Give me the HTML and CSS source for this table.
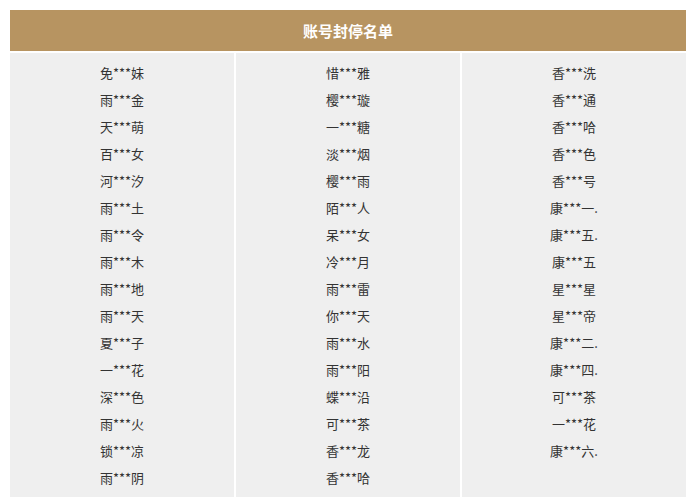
FILE: index.html
```html
<!DOCTYPE html>
<html lang="zh-CN">
<head>
<meta charset="utf-8">
<title>账号封停名单</title>
<link rel="stylesheet" href="styles.css">
</head>
<body>
<div class="board">
  <div class="board-title">账号封停名单</div>
  <div class="board-cols">
    <ul class="col">
      <li>免***妹</li><li>雨***金</li><li>天***萌</li><li>百***女</li><li>河***汐</li><li>雨***土</li><li>雨***令</li><li>雨***木</li><li>雨***地</li><li>雨***天</li><li>夏***子</li><li>一***花</li><li>深***色</li><li>雨***火</li><li>锁***凉</li><li>雨***阴</li>
    </ul>
    <ul class="col">
      <li>惜***雅</li><li>樱***璇</li><li>一***糖</li><li>淡***烟</li><li>樱***雨</li><li>陌***人</li><li>呆***女</li><li>冷***月</li><li>雨***雷</li><li>你***天</li><li>雨***水</li><li>雨***阳</li><li>蝶***沿</li><li>可***茶</li><li>香***龙</li><li>香***哈</li>
    </ul>
    <ul class="col">
      <li>香***洗</li><li>香***通</li><li>香***哈</li><li>香***色</li><li>香***号</li><li>康***一.</li><li>康***五.</li><li>康***五</li><li>星***星</li><li>星***帝</li><li>康***二.</li><li>康***四.</li><li>可***茶</li><li>一***花</li><li>康***六.</li>
    </ul>
  </div>
</div>
</body>
</html>
```
FILE: styles.css
```css
html, body {
  margin: 0;
  padding: 0;
  background: #fff;
}
body {
  font-family: "Noto Sans CJK SC", "Liberation Sans", sans-serif;
  color: #333;
}
.board {
  width: 676px;
  margin: 10px 0 0 10px;
  display: flex;
  flex-direction: column;
  gap: 2px;
}
.board-title {
  height: 41px;
  line-height: 41px;
  background: #b79461;
  color: #fff;
  text-align: center;
  font-size: 15px;
  font-weight: bold;
}
.board-cols {
  display: grid;
  grid-template-columns: 1fr 1fr 1fr;
  gap: 2px;
}
.col {
  list-style: none;
  margin: 0;
  padding: 6px 0 10px;
  background: #efefef;
  height: 428px;
}
.col li {
  height: 27px;
  line-height: 27px;
  text-align: center;
  font-size: 13px;
}
```
